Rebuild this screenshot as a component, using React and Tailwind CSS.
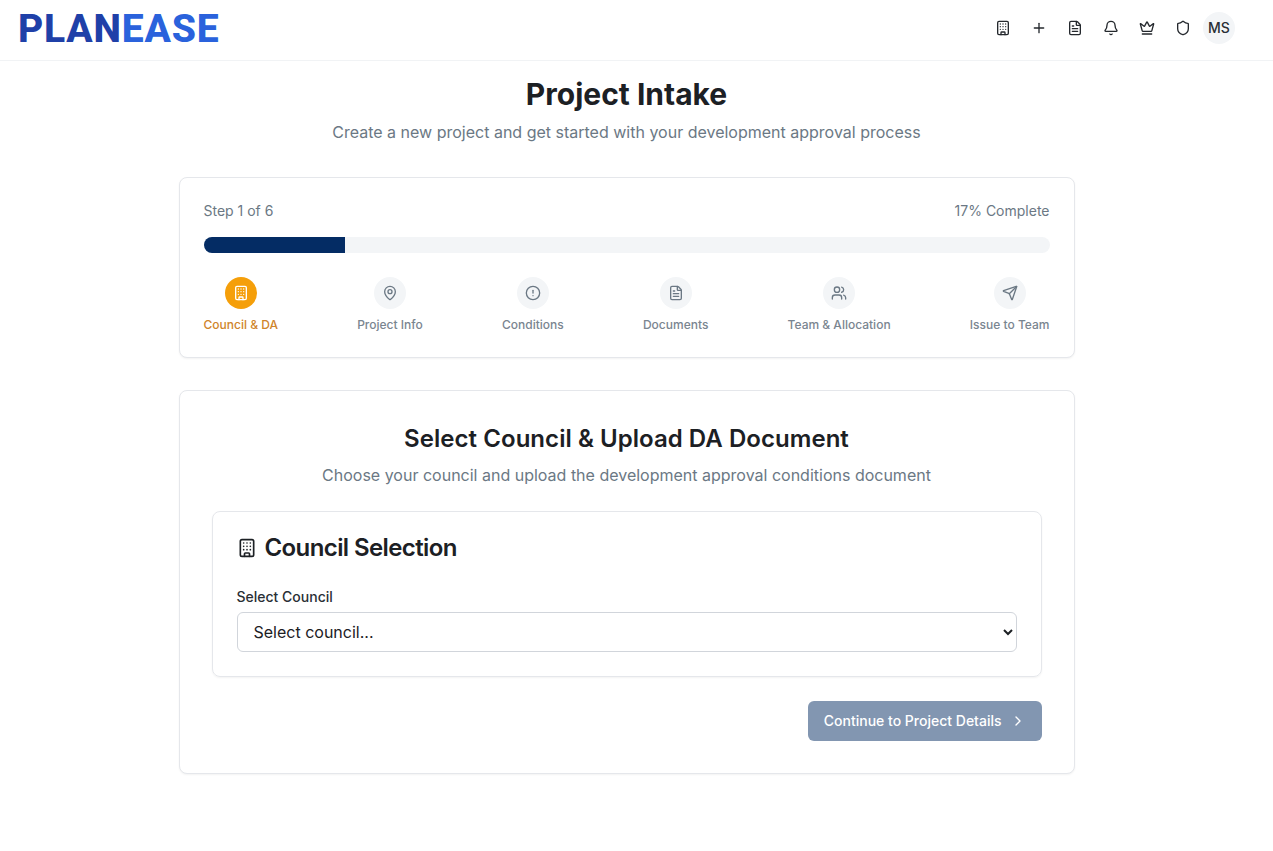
import { Building, Plus, FileText, Bell, Crown, Shield, MapPin, CircleAlert, Users, Send, ChevronRight } from "lucide-react";

const steps = [
  { label: "Council & DA", icon: Building, active: true },
  { label: "Project Info", icon: MapPin },
  { label: "Conditions", icon: CircleAlert },
  { label: "Documents", icon: FileText },
  { label: "Team & Allocation", icon: Users },
  { label: "Issue to Team", icon: Send },
];

const headerIcons = [Building, Plus, FileText, Bell, Crown, Shield];

const App = () => {
  return (
    <div className="min-h-[851px] bg-white font-['Inter',sans-serif] text-[#1c2024]">
      {/* Header */}
      <header className="h-[61px] pb-1 flex items-center justify-between pl-[18px] pr-[38px] border-b border-[#f1f3f5]">
        <div className="pt-[2px] font-['Roboto',sans-serif] font-extrabold text-[39px] leading-none tracking-[0.8px] select-none">
          <span className="text-[#1f40a8]">PLAN</span>
          <span className="text-[#2a62dc]">EASE</span>
        </div>
        <div className="flex items-center">
          {headerIcons.map((Icon, i) => (
            <button key={i} className="w-9 h-9 flex items-center justify-center text-[#24282d]">
              <Icon size={16} strokeWidth={2} />
            </button>
          ))}
          <div className="w-8 h-8 ml-[2px] rounded-full bg-[#f3f5f7] flex items-center justify-center text-sm font-medium text-[#2a2f35]">
            MS
          </div>
        </div>
      </header>

      <div className="w-[1253px]">
        <main className="max-w-4xl mx-auto">
          <div className="pt-[15px] text-center">
            <h1 className="text-3xl leading-9 font-bold">Project Intake</h1>
            <p className="mt-2 text-base leading-6 text-[#6b7884]">
              Create a new project and get started with your development approval process
            </p>
          </div>

          {/* Progress card */}
          <section className="mt-[33px] h-[181px] p-6 bg-white border border-[#e5e7eb] rounded-lg shadow-xs">
            <div className="-mt-px flex justify-between text-sm leading-5 text-[#6b7884]">
              <span>Step 1 of 6</span>
              <span>17% Complete</span>
            </div>
            <div className="mt-4 h-4 rounded-full bg-[#f3f5f7] overflow-hidden">
              <div className="h-full w-[16.67%] bg-[#042c64]" />
            </div>
            <div className="mt-6 flex justify-between">
              {steps.map((step) => {
                const Icon = step.icon;
                return (
                  <div key={step.label} className="flex flex-col items-center gap-2">
                    <div
                      className={
                        step.active
                          ? "w-8 h-8 rounded-full flex items-center justify-center bg-[#f59f0a] text-white"
                          : "w-8 h-8 rounded-full flex items-center justify-center bg-[#f3f5f7] text-[#6b7884]"
                      }
                    >
                      <Icon size={16} strokeWidth={2} />
                    </div>
                    <span
                      className={
                        step.active
                          ? "text-xs leading-4 font-medium text-[#d0842a]"
                          : "text-xs leading-4 font-medium text-[#7a8590]"
                      }
                    >
                      {step.label}
                    </span>
                  </div>
                );
              })}
            </div>
          </section>

          {/* Form card */}
          <section className="mt-8 h-[384px] p-8 bg-white border border-[#e5e7eb] rounded-lg shadow-xs">
            <div className="text-center">
              <h2 className="text-2xl leading-8 font-semibold tracking-[0.05px]">Select Council &amp; Upload DA Document</h2>
              <p className="mt-2 text-base leading-6 text-[#6b7884]">
                Choose your council and upload the development approval conditions document
              </p>
            </div>

            <div className="mt-6 h-[166px] p-6 border border-[#e5e7eb] rounded-lg shadow-xs">
              <h3 className="flex items-center gap-2 text-2xl leading-6 font-semibold tracking-tight">
                <Building size={20} strokeWidth={2} />
                Council Selection
              </h3>
              <label htmlFor="council" className="block mt-[30px] text-sm leading-[14px] font-medium text-[#2a2f35]">
                Select Council
              </label>
              <select
                id="council"
                defaultValue=""
                className="mt-2 w-full h-10 px-3 bg-white border border-[#d1d5db] rounded-md text-base"
              >
                <option value="">Select council...</option>
              </select>
            </div>

            <div className="mt-6 flex justify-end">
              <button className="h-10 px-4 flex items-center gap-2 rounded-md bg-[#8296b1] text-white text-sm font-medium">
                Continue to Project Details
                <ChevronRight size={16} strokeWidth={2} />
              </button>
            </div>
          </section>
        </main>
      </div>
    </div>
  );
};

export default App;
